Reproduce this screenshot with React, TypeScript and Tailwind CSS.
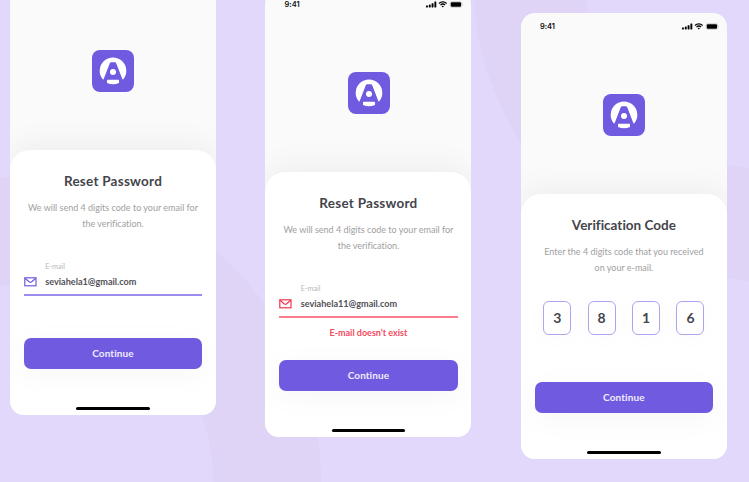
import type { ReactNode } from "react";

function Backdrop() {
  return (
    <svg className="absolute inset-0" width="749" height="482" viewBox="0 0 749 482" fill="none">
      <circle cx="18" cy="480" r="249" stroke="#dfd4f6" strokeWidth="108" />
      <circle cx="775" cy="-20" r="246" stroke="#dfd4f6" strokeWidth="112" />
    </svg>
  );
}

function StatusBar() {
  return (
    <div className="flex h-[26px] items-end justify-between pb-[8.5px] pl-[19px] pr-[8px]">
      <span className="font-['Inter',sans-serif] text-[7.5px] font-semibold leading-[8px] text-[#111]">9:41</span>
      <svg width="37" height="8" viewBox="0 0 37 8" fill="#000">
        <rect x="0" y="4.4" width="1.9" height="2.1" rx="0.4" />
        <rect x="2.8" y="3.5" width="1.9" height="3" rx="0.4" />
        <rect x="5.6" y="2.2" width="1.9" height="4.3" rx="0.4" />
        <rect x="8.4" y="0.6" width="1.9" height="5.9" rx="0.4" />
        <g fill="none" stroke="#000" strokeWidth="1.3">
          <path d="M13 2.5a5.4 5.4 0 0 1 7.6 0" />
          <path d="M14.5 4.1a3.3 3.3 0 0 1 4.6 0" />
        </g>
        <path d="M15.6 5.3a1.7 1.7 0 0 1 2.4 0l-1.2 1.3z" />
        <rect x="24.2" y="0.6" width="11.4" height="5.8" rx="1.7" fill="none" stroke="#999" strokeWidth="0.4" />
        <rect x="24.8" y="1.2" width="10.2" height="4.6" rx="1" />
        <path d="M36.1 2.6v1.8c.6-.3.6-1.5 0-1.8z" fill="#999" />
      </svg>
    </div>
  );
}

function Logo() {
  return (
    <svg className="ml-[82.2px] mt-[55px] block" width="42" height="42" viewBox="0 0 42 42">
      <rect width="42" height="42" rx="8" fill="#6f5ae0" />
      <path
        d="M11.5 29.6L10.7 29.2A13.3 13.3 0 1 1 31.3 29.2L30.5 29.6L24.2 13.2Q23.8 12.3 22.9 12.3H19.1Q18.2 12.3 17.8 13.2Z"
        fill="#fff"
      />
      <circle cx="21" cy="22.1" r="3" fill="#fff" />
      <path d="M15.8 29.8H26.2Q27 29.8 27 30.6V33.1Q21 35.6 15 33.1V30.6Q15 29.8 15.8 29.8Z" fill="#fff" />
    </svg>
  );
}

function MailIcon({ color }: { color: string }) {
  return (
    <svg width="13" height="10" viewBox="0 0 13 10" fill="none" stroke={color} strokeWidth="1.2">
      <rect x="0.8" y="0.8" width="11.2" height="8" />
      <path d="M1 1.2L5.4 5Q6.4 5.7 7.4 5L11.8 1.2" />
    </svg>
  );
}

function Phone({
  className,
  title,
  lines,
  hideStatus = false,
  children,
}: {
  className: string;
  title: ReactNode;
  lines: ReactNode;
  hideStatus?: boolean;
  children: ReactNode;
}) {
  return (
    <section
      className={`relative flex h-[446px] w-[206px] shrink-0 flex-col overflow-hidden rounded-[14px] bg-[#fafafa] ${className}`}
    >
      {hideStatus ? <div className="h-[26px]" /> : <StatusBar />}
      <Logo />
      <div className="mt-[58px] flex flex-1 flex-col items-center rounded-t-[20px] bg-white shadow-[0_-4px_32px_rgba(0,0,0,0.06)]">
        <h1 className="mt-[22px] h-[18px] whitespace-nowrap text-[13.5px] font-bold leading-[18px] text-[#44454b]">
          {title}
        </h1>
        <div className="mt-[9.5px] whitespace-nowrap text-center text-[9px] leading-[16.5px] text-[#a0a0a0]">
          {lines}
        </div>
        {children}
        <button className="mt-auto h-[31.5px] w-[178.5px] shrink-0 rounded-[7px] bg-[#6f5ae0] text-[10px] font-bold leading-[31px] text-[#f0edff] shadow-[0_6px_30px_rgba(0,0,0,0.04)]">
          <span className="tracking-[0.1px]">Continue</span>
        </button>
        <div className="mb-[5px] mt-[38px] h-[3px] w-[73.7px] shrink-0 rounded-full bg-black" />
      </div>
    </section>
  );
}

function EmailField({ value, error }: { value: string; error?: string }) {
  return (
    <div className="mt-[27.5px] flex w-[178.5px] flex-col whitespace-nowrap">
      <span className="ml-[21.5px] text-[7.2px] leading-[14px] text-[#b9b9b9]">E-mail</span>
      <div className="flex h-[20px] items-start pt-[3px]">
        <MailIcon color={error ? "#f5324a" : "#6f5ae0"} />
        <span className="ml-[8.5px] mt-[-2px] text-[9.1px] font-bold leading-[14px] text-[#505157]">{value}</span>
      </div>
      {error ? <div className="h-[1.5px] bg-[#fb7f8c]" /> : <div className="h-[1.5px] bg-[#9b8cf0]" />}
      {error && <p className="mt-[8.5px] text-center text-[9px] font-bold leading-[14px] text-[#f5495c]">{error}</p>}
    </div>
  );
}

export default function App() {
  return (
    <main className="relative h-[482px] w-[749px] overflow-hidden bg-[#e2d8fb] font-['Lato','Open_Sans',sans-serif] [font-variant-ligatures:none]">
      <Backdrop />
      <div className="flex items-start gap-[49.45px] pl-[10px]">
        <Phone
          className="-mt-[31px]"
          hideStatus
          title={<span className="tracking-[0.25px]">Reset Password</span>}
          lines={<p>We will send 4 digits code to your email for<br />the verification.</p>}
        >
          <EmailField value="seviahela1@gmail.com" />
        </Phone>
        <Phone
          className="-mt-[9px]"
          title={<span className="tracking-[0.25px]">Reset Password</span>}
          lines={<p>We will send 4 digits code to your email for<br />the verification.</p>}
        >
          <EmailField value="seviahela11@gmail.com" error="E-mail doesn’t exist" />
        </Phone>
        <Phone
          className="mt-[13px]"
          title={<span>Verification Code</span>}
          lines={<p>Enter the 4 digits code that you received<br />on your e-mail.</p>}
        >
          <div className="mt-[24px] flex gap-[16.4px]">
            {["3", "8", "1", "6"].map((digit) => (
              <span
                key={digit}
                className="flex h-[34px] w-[28px] items-center justify-center rounded-[6px] border border-[#b0a4f2] bg-white text-[14px] font-bold leading-none text-[#44454b] shadow-[0_3px_24px_rgba(0,0,0,0.025)]"
              >
                {digit}
              </span>
            ))}
          </div>
        </Phone>
      </div>
    </main>
  );
}
